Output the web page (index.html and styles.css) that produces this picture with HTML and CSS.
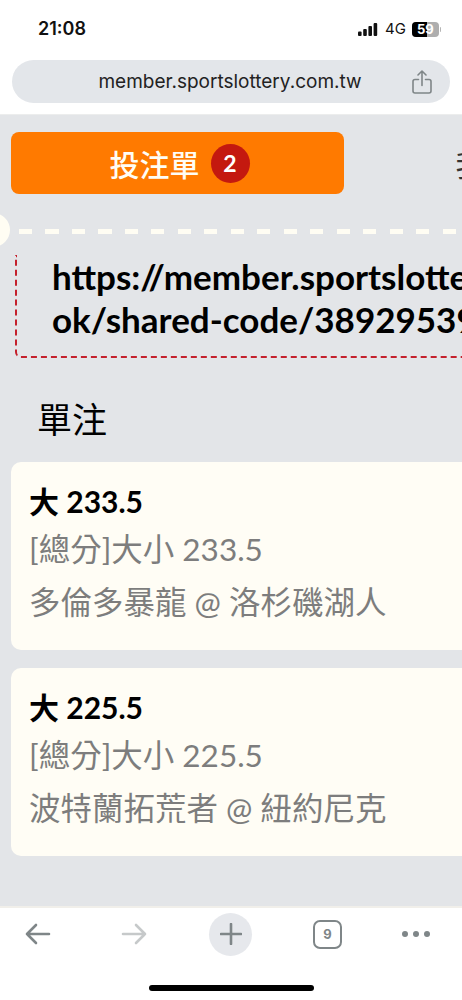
FILE: index.html
```html
<!DOCTYPE html>
<html lang="zh-Hant">
<head>
    <meta charset="UTF-8">
    <meta name="viewport" content="width=device-width, initial-scale=1.0">
    <title>投注單</title>
    <link rel="stylesheet" href="styles.css">
</head>
<body>
    <div class="phone">
        <header class="browser-top">
            <div class="status-bar">
                <span class="clock">21:08</span>
                <div class="status-icons">
                    <svg class="signal" width="20" height="13" viewBox="0 0 20 13">
                        <rect x="0" y="8.5" width="3.6" height="4.5" rx="1"/>
                        <rect x="5.2" y="6" width="3.6" height="7" rx="1"/>
                        <rect x="10.4" y="3" width="3.6" height="10" rx="1"/>
                        <rect x="15.6" y="0" width="3.6" height="13" rx="1"/>
                    </svg>
                    <span class="network">4G</span>
                    <div class="battery">
                        <div class="battery-body"><span class="battery-fill"></span><span class="battery-level">59</span></div>
                        <span class="battery-cap"></span>
                    </div>
                </div>
            </div>
            <div class="url-bar">
                <span class="url-text">member.sportslottery.com.tw</span>
                <svg class="share-icon" width="20" height="24" viewBox="0 0 20 24" fill="none" stroke="#7f8688" stroke-width="1.6" stroke-linecap="round" stroke-linejoin="round">
                    <path d="M6.5 9.5H3a2 2 0 0 0-2 2V21a2 2 0 0 0 2 2h14a2 2 0 0 0 2-2v-9.500a2 2 0 0 0-2-2h-3.500"/>
                    <path d="M10 15.500V1.500M6 5l4-4 4 4"/>
                </svg>
            </div>
        </header>

        <main class="content">
            <div class="tabs">
                <div class="tab tab-active">投注單 <span class="tab-count">2</span></div>
                <div class="tab tab-other">我的投注</div>
            </div>

            <div class="ticket-edge">
                <span class="ticket-notch"></span>
                <span class="ticket-dashes"></span>
            </div>

            <div class="share-box">
                <p>https://member.sportslottery.com.tw/bo<br>ok/shared-code/38929539</p>
            </div>

            <h2 class="bet-type">單注</h2>

            <section class="bet-card">
                <h3>大 233.5</h3>
                <p class="market">[總分]大小 233.5</p>
                <p class="teams">多倫多暴龍 @ 洛杉磯湖人</p>
            </section>
            <section class="bet-card">
                <h3>大 225.5</h3>
                <p class="market">[總分]大小 225.5</p>
                <p class="teams">波特蘭拓荒者 @ 紐約尼克</p>
            </section>
        </main>

        <footer class="toolbar">
            <div class="toolbar-icons">
                <svg class="nav-back" width="26" height="24" viewBox="0 0 26 24" fill="none" stroke="#7f8688" stroke-width="2.6" stroke-linecap="round" stroke-linejoin="round">
                    <path d="M2 12h22M11 3l-9 9 9 9"/>
                </svg>
                <svg class="nav-forward" width="26" height="24" viewBox="0 0 26 24" fill="none" stroke="#c6c9ca" stroke-width="2.6" stroke-linecap="round" stroke-linejoin="round">
                    <path d="M2 12h22M15 3l9 9-9 9"/>
                </svg>
                <div class="new-tab">
                    <svg width="22" height="22" viewBox="0 0 22 22" fill="none" stroke="#7f8688" stroke-width="2.6" stroke-linecap="round">
                        <path d="M11 1v20M1 11h20"/>
                    </svg>
                </div>
                <div class="tab-counter">9</div>
                <div class="more-dots"><span></span><span></span><span></span></div>
            </div>
            <div class="home-bar"></div>
        </footer>
    </div>
</body>
</html>
```

FILE: styles.css
```css
* {
    margin: 0;
    padding: 0;
    box-sizing: border-box;
}
body {
    background-color: #fff;
    color: #000;
    font-family: "Lato", "Noto Sans CJK TC", sans-serif;
}
.phone {
    width: 462px;
    height: 1000px;
    display: flex;
    flex-direction: column;
    overflow: hidden;
}

/* browser chrome */
.browser-top {
    height: 115px;
    flex-shrink: 0;
    background: #fff;
    border-bottom: 1px solid #eceded;
}
.status-bar {
    height: 60px;
    display: flex;
    justify-content: space-between;
    align-items: flex-start;
    padding: 17px 2px 0 38px;
}
.clock {
    font-family: "Inter", sans-serif;
    font-size: 18px;
    font-weight: 600;
    line-height: 24px;
    color: #111;
}
.status-icons {
    display: flex;
    align-items: center;
    height: 24px;
    width: 84px;
    color: #111;
    margin-right: 18px;
}
.signal {
    fill: #111;
    margin-right: 7px;
}
.network {
    font-family: "Inter", sans-serif;
    font-size: 15px;
    line-height: 24px;
    margin-right: 6px;
}
.battery {
    display: flex;
    align-items: center;
}
.battery-body {
    position: relative;
    width: 27px;
    height: 15px;
    border-radius: 4px;
    background: #aeaeae;
    overflow: hidden;
}
.battery-fill {
    display: block;
    width: 15px;
    height: 15px;
    background: #000;
}
.battery-level {
    position: absolute;
    left: 0;
    right: 0;
    top: 0;
    text-align: center;
    font-family: "Inter", sans-serif;
    font-size: 13px;
    font-weight: 700;
    line-height: 15px;
    color: #fff;
}
.battery-cap {
    width: 1.5px;
    height: 5px;
    margin-left: 1px;
    background: #b5b5b5;
    border-radius: 0 2px 2px 0;
}
.url-bar {
    position: relative;
    height: 43px;
    margin: 0 12px;
    border-radius: 22px;
    background: #e3e6ea;
    display: flex;
    align-items: center;
    justify-content: center;
}
.url-text {
    font-family: "Inter", sans-serif;
    font-size: 19px;
    color: #222;
    margin-left: -2px;
}
.share-icon {
    position: absolute;
    right: 18px;
    top: 10px;
}

/* page */
.content {
    flex: 1;
    background: #e3e5e8;
    overflow: hidden;
    padding-top: 17px;
}
.tabs {
    display: flex;
    width: 700px;
    padding-left: 11px;
}
.tab {
    width: 333px;
    height: 62px;
    display: flex;
    align-items: center;
    justify-content: center;
    font-size: 30px;
    font-weight: 500;
}
.tab-active {
    background: #ff7a00;
    color: #fffdf5;
    border-radius: 8px;
    padding-left: 4px;
}
.tab-count {
    width: 39px;
    height: 39px;
    margin-left: 11px;
    border-radius: 50%;
    background: #c4190f;
    color: #fff;
    font-size: 23px;
    font-weight: 700;
    text-align: center;
    line-height: 39px;
}
.tab-other {
    color: #333;
    font-weight: 400;
    padding-left: 10px;
}
.ticket-edge {
    position: relative;
    height: 34px;
    margin-top: 19px;
}
.ticket-notch {
    position: absolute;
    left: -24px;
    top: 0;
    width: 34px;
    height: 34px;
    border-radius: 50%;
    background: #fffdf3;
}
.ticket-dashes {
    position: absolute;
    left: 19px;
    right: 0;
    top: 16px;
    height: 4.500px;
    background: repeating-linear-gradient(to right, #fffdf3 0, #fffdf3 13px, transparent 13px, transparent 26.500px);
}
.share-box {
    width: 700px;
    height: 103px;
    margin: 8px 0 0 15px;
    padding: 0 0 0 35px;
    border-left: 2px dashed #c4202c;
    border-bottom: 2px dashed #c4202c;
    border-bottom-left-radius: 6px;
}
.share-box p {
    font-size: 35px;
    font-weight: 700;
    line-height: 43px;
    white-space: nowrap;
}
.bet-type {
    font-size: 35px;
    font-weight: 400;
    line-height: 44px;
    margin: 39px 0 0 37px;
}
.bet-card {
    width: 600px;
    margin: 21px 0 0 11px;
    padding: 18px 18px 0;
    border-radius: 10px;
    background: #fffdf5;
    height: 188px;
}
.bet-card + .bet-card {
    margin-top: 18px;
}
.bet-card h3 {
    font-size: 30px;
    font-weight: 700;
    line-height: 42px;
}
.market, .teams {
    font-size: 31.500px;
    color: #7d7d7d;
    line-height: 40px;
    margin-top: 7px;
}
.teams {
    margin-top: 13px;
}

/* bottom toolbar */
.toolbar {
    height: 94px;
    flex-shrink: 0;
    background: #fff;
    border-top: 2px solid #f1efea;
    position: relative;
}
.toolbar-icons {
    display: flex;
    align-items: center;
    padding: 4px 0 0 25px;
    height: 48px;
}
.nav-forward {
    margin-left: 70px;
}
.new-tab {
    width: 43px;
    height: 43px;
    margin-left: 62px;
    border-radius: 50%;
    background: #e6e8ec;
    display: flex;
    align-items: center;
    justify-content: center;
}
.tab-counter {
    width: 29px;
    height: 29px;
    margin-left: 61px;
    border: 2.500px solid #7f8688;
    border-radius: 7px;
    font-family: "Inter", sans-serif;
    font-size: 13px;
    font-weight: 700;
    color: #7f8688;
    text-align: center;
    line-height: 24px;
}
.more-dots {
    display: flex;
    gap: 5px;
    margin-left: 60px;
}
.more-dots span {
    width: 6px;
    height: 6px;
    border-radius: 50%;
    background: #7f8688;
}
.home-bar {
    position: absolute;
    left: 149px;
    bottom: 9px;
    width: 165px;
    height: 6px;
    border-radius: 3px;
    background: #000;
}
```
